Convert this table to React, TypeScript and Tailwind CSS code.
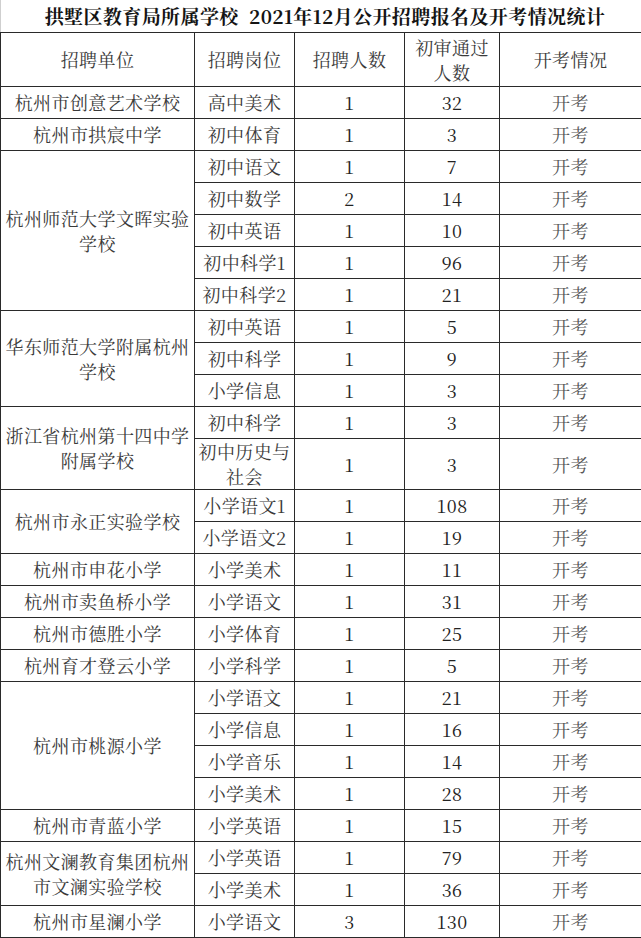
import React from "react";

type Sub = { pos: React.ReactNode; n: string; pass: string; h?: number };
type Group = { unit: React.ReactNode; subs: Sub[] };

const groups: Group[] = [
  { unit: "杭州市创意艺术学校", subs: [{ pos: "高中美术", n: "1", pass: "32" }] },
  { unit: "杭州市拱宸中学", subs: [{ pos: "初中体育", n: "1", pass: "3" }] },
  {
    unit: (<>杭州师范大学文晖实验<br />学校</>),
    subs: [
      { pos: "初中语文", n: "1", pass: "7" },
      { pos: "初中数学", n: "2", pass: "14" },
      { pos: "初中英语", n: "1", pass: "10" },
      { pos: "初中科学1", n: "1", pass: "96" },
      { pos: "初中科学2", n: "1", pass: "21" },
    ],
  },
  {
    unit: (<>华东师范大学附属杭州<br />学校</>),
    subs: [
      { pos: "初中英语", n: "1", pass: "5" },
      { pos: "初中科学", n: "1", pass: "9" },
      { pos: "小学信息", n: "1", pass: "3" },
    ],
  },
  {
    unit: (<>浙江省杭州第十四中学<br />附属学校</>),
    subs: [
      { pos: "初中科学", n: "1", pass: "3" },
      { pos: (<>初中历史与<br />社会</>), n: "1", pass: "3", h: 51 },
    ],
  },
  {
    unit: "杭州市永正实验学校",
    subs: [
      { pos: "小学语文1", n: "1", pass: "108" },
      { pos: "小学语文2", n: "1", pass: "19" },
    ],
  },
  { unit: "杭州市申花小学", subs: [{ pos: "小学美术", n: "1", pass: "11" }] },
  { unit: "杭州市卖鱼桥小学", subs: [{ pos: "小学语文", n: "1", pass: "31" }] },
  { unit: "杭州市德胜小学", subs: [{ pos: "小学体育", n: "1", pass: "25" }] },
  { unit: "杭州育才登云小学", subs: [{ pos: "小学科学", n: "1", pass: "5" }] },
  {
    unit: "杭州市桃源小学",
    subs: [
      { pos: "小学语文", n: "1", pass: "21" },
      { pos: "小学信息", n: "1", pass: "16" },
      { pos: "小学音乐", n: "1", pass: "14" },
      { pos: "小学美术", n: "1", pass: "28" },
    ],
  },
  { unit: "杭州市青蓝小学", subs: [{ pos: "小学英语", n: "1", pass: "15" }] },
  {
    unit: (<>杭州文澜教育集团杭州<br />市文澜实验学校</>),
    subs: [
      { pos: "小学英语", n: "1", pass: "79" },
      { pos: "小学美术", n: "1", pass: "36" },
    ],
  },
  { unit: "杭州市星澜小学", subs: [{ pos: "小学语文", n: "3", pass: "130" }] },
];

const font = {
  fontFamily:
    '"Noto Serif CJK SC", "Liberation Serif", "Noto Sans CJK SC", serif',
};

const cell =
  "border border-[#2a2a2a] p-0 text-center align-middle text-[18px] leading-[25px] tracking-[0.4px] text-[#3a3a3a]";

export default function App() {
  return (
    <div className="w-[641px] h-[938px] bg-white overflow-hidden" style={font}>
      <div className="h-[32px] flex items-center justify-center pl-[8px] border-l border-[#cfcfcf] text-[19px] font-bold tracking-[0.4px] text-[#141414]">
        拱墅区教育局所属学校&nbsp; 2021年12月公开招聘报名及开考情况统计
      </div>
      <table className="w-[641px] table-fixed border-collapse">
        <colgroup>
          <col className="w-[194px]" />
          <col className="w-[100px]" />
          <col className="w-[110px]" />
          <col className="w-[95px]" />
          <col className="w-[142px]" />
        </colgroup>
        <tbody>
          <tr className="h-[54px]">
            <td className={cell}>招聘单位</td>
            <td className={cell}>招聘岗位</td>
            <td className={cell}>招聘人数</td>
            <td className={cell + " leading-[23px]"}>
              初审通过
              <br />
              人数
            </td>
            <td className={cell}>开考情况</td>
          </tr>
          {groups.map((g, gi) =>
            g.subs.map((s, si) => (
              <tr key={gi + "-" + si} style={{ height: s.h ?? 32 }}>
                {si === 0 && (
                  <td className={cell} rowSpan={g.subs.length}>
                    {g.unit}
                  </td>
                )}
                <td className={cell}>{s.pos}</td>
                <td className={cell + " text-[#222]"}>{s.n}</td>
                <td className={cell + " text-[#222]"}>{s.pass}</td>
                <td className={cell + " text-[#555]"}>开考</td>
              </tr>
            ))
          )}
        </tbody>
      </table>
    </div>
  );
}
